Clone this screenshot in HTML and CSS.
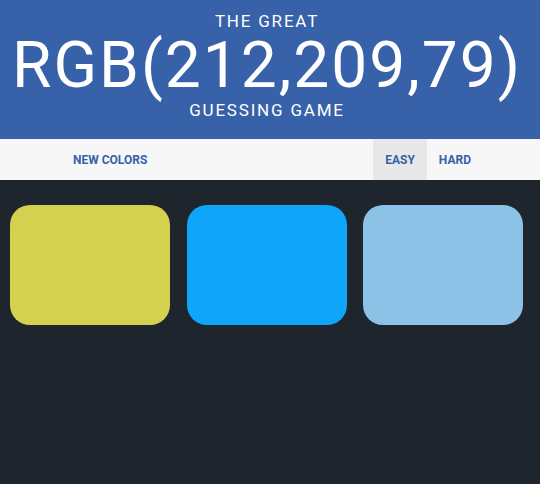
FILE: index.html
```html
<!DOCTYPE html>
<html>
<head>
<meta charset="utf-8">
<link rel="stylesheet" href="styles.css">
</head>
<body>
<header class="hero">
  <div class="sub">The Great</div>
  <div class="rgb">RGB(212,209,79)</div>
  <div class="sub">Guessing Game</div>
</header>
<nav class="stripe">
  <button class="btn new">New Colors</button>
  <span class="msg"></span>
  <button class="btn mode selected">Easy</button>
  <button class="btn mode">Hard</button>
</nav>
<main class="board">
  <div class="square sq-a"></div>
  <div class="square sq-b"></div>
  <div class="square sq-c"></div>
</main>
</body>
</html>
```
FILE: styles.css
```css
html, body {
  margin: 0;
  padding: 0;
  background: #1f252d;
  font-family: Roboto, "Liberation Sans", sans-serif;
}
.hero {
  background: #3761a8;
  color: #fff;
  text-align: center;
  height: 139px;
  box-sizing: border-box;
  padding: 11px 6px 0 0;
}
.sub {
  text-transform: uppercase;
  font-size: 17px;
  letter-spacing: 1.8px;
  line-height: 20px;
}
.rgb {
  font-size: 64px;
  letter-spacing: 2px;
  line-height: 72px;
  margin: -1px 0 -2.5px;
}
.stripe {
  background: #f7f7f7;
  height: 41px;
  display: flex;
  align-items: stretch;
}
.btn {
  border: none;
  background: transparent;
  font-family: Roboto, "Liberation Sans", sans-serif;
  font-weight: 700;
  font-size: 12px;
  color: #3761a8;
  text-transform: uppercase;
  padding: 0 12px;
  cursor: pointer;
}
.new {
  margin-left: 61px;
}
.msg {
  flex: 1;
}
.mode.selected {
  background: #e8e8e8;
}
.mode:last-child {
  margin-right: 57px;
}
.board {
  display: flex;
  gap: 16.5px;
  padding: 25px 0 0 10px;
}
.square {
  width: 160px;
  height: 120px;
  border-radius: 20px;
}
.sq-a { background: #d4d14f; }
.sq-b { background: #0ea5fb; }
.sq-c { background: #8bc2e6; }
```
